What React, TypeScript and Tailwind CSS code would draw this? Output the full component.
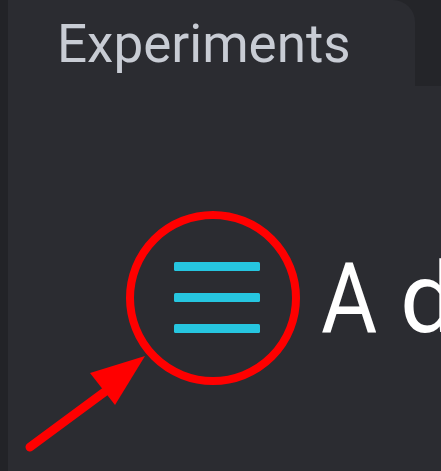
import React from "react";

export default function App() {
  return (
    <div className="relative w-[441px] h-[471px] overflow-hidden flex bg-[#2b2c31]" style={{ fontFamily: "Roboto, 'Liberation Sans', sans-serif" }}>
      <div className="w-[8px] shrink-0 h-full bg-[#222327]" />
      <div className="flex-1 min-w-0 flex flex-col">
        <div className="flex h-[86px] bg-[#242529]">
          <div className="w-[407px] shrink-0 h-full bg-[#2b2c31] rounded-tr-[22px] pl-[49px] pt-[18px]">
            <span className="text-[53px] leading-none text-[#c8ccd4]">Experiments</span>
          </div>
        </div>
        <div className="flex items-start pl-[166px] pt-[164px] whitespace-nowrap">
          <svg className="mt-[12px] shrink-0" width="86" height="72" viewBox="0 0 86 72">
            <rect x="0" y="0" width="86" height="9" rx="1.5" fill="#26c6e0" />
            <rect x="0" y="31" width="86" height="9" rx="1.5" fill="#26c6e0" />
            <rect x="0" y="62" width="86" height="9" rx="1.5" fill="#26c6e0" />
          </svg>
          <div className="ml-[61px] flex text-[98px] leading-none text-white">
            <span className="inline-block origin-left scale-x-[0.88] w-[57px]">A</span>
            <span className="ml-[22px]">d</span>
          </div>
        </div>
      </div>
      <svg className="absolute left-0 top-0 pointer-events-none" width="441" height="471" viewBox="0 0 441 471">
        <circle cx="213" cy="298" r="83" fill="none" stroke="#ff0000" strokeWidth="8" />
        <line x1="30" y1="447" x2="118" y2="382" stroke="#ff0000" strokeWidth="9" strokeLinecap="round" />
        <polygon points="145,356 90,373 115,405" fill="#ff0000" />
      </svg>
    </div>
  );
}
